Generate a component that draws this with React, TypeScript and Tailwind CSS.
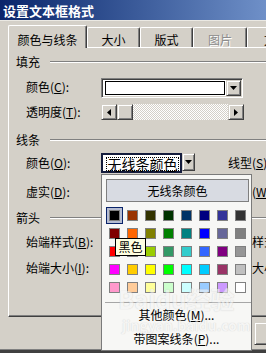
import React from "react";

// 经典 Windows 控件边框
const raised =
  "bg-[#d4d0c8] border border-t-[#d4d0c8] border-l-[#d4d0c8] border-r-[#404040] border-b-[#404040] shadow-[inset_1px_1px_0_#ffffff,inset_-1px_-1px_0_#808080]";
const sunken =
  "border border-t-[#808080] border-l-[#808080] border-r-white border-b-white shadow-[inset_1px_1px_0_#404040,inset_-1px_-1px_0_#d4d0c8]";

const palette = [
  ["#000000", "#993300", "#333300", "#003300", "#003366", "#000080", "#333399", "#333333"],
  ["#800000", "#ff6600", "#808000", "#008000", "#008080", "#0000ff", "#666699", "#808080"],
  ["#ff0000", "#ff9900", "#99cc00", "#339966", "#33cccc", "#3366ff", "#800080", "#969696"],
  ["#ff00ff", "#ffcc00", "#ffff00", "#00ff00", "#00ffff", "#00ccff", "#993366", "#c0c0c0"],
  ["#ff99cc", "#ffcc99", "#ffff99", "#ccffcc", "#ccffff", "#99ccff", "#cc99ff", "#ffffff"],
];

function Acc({ text, k, tail = ":" }: { text: string; k: string; tail?: string }) {
  return (
    <span className="whitespace-nowrap">
      {text}(<u>{k}</u>){tail}
    </span>
  );
}

const Down = () => (
  <svg width="7" height="4" viewBox="0 0 7 4">
    <path d="M0 0h7L3.5 4z" fill="#000" />
  </svg>
);
const Left = () => (
  <svg width="4" height="7" viewBox="0 0 4 7">
    <path d="M4 0v7L0 3.5z" fill="#000" />
  </svg>
);
const Right = () => (
  <svg width="4" height="7" viewBox="0 0 4 7">
    <path d="M0 0v7L4 3.5z" fill="#000" />
  </svg>
);

function Section({ title, mt }: { title: string; mt: string }) {
  return (
    <div className={`${mt} h-[14px] flex items-center pl-[7px]`}>
      <span className="shrink-0">{title}</span>
      <div className="ml-[10px] flex-1 border-t border-t-[#808080] border-b border-b-white" />
    </div>
  );
}

function Tab({ label, w, disabled }: { label: string; w: string; disabled?: boolean }) {
  return (
    <div
      className={`${w} h-[20px] shrink-0 pt-[6px] text-center border-t border-l border-white border-r border-r-[#404040] shadow-[inset_-1px_0_0_#808080] rounded-t-[2px] ${
        disabled ? "text-[#8c8c8c] [text-shadow:1px_1px_0_#ffffff]" : ""
      }`}
    >
      {label}
    </div>
  );
}

export default function App() {
  return (
    <div className="relative w-[266px] h-[353px] overflow-hidden bg-[#d4d0c8] font-['Noto_Sans_CJK_SC',sans-serif] text-[12px] leading-none text-black">
      {/* Title bar */}
      <div className="h-[20px] bg-linear-to-r from-[#0a246a] to-[#6f90c8] pl-[3px] flex items-center">
        <span className="text-white font-bold text-[13px]">设置文本框格式</span>
      </div>
      <div className="h-[1px] bg-[#ebe9e3]" />

      {/* Tabs */}
      <div className="mt-[4px] h-[22px] flex items-end pl-[8px]">
        <div className="relative z-10 w-[79px] h-[23px] -mb-[1px] shrink-0 pt-[8px] text-center bg-[#d4d0c8] border-t border-l border-white border-r border-r-[#404040] shadow-[inset_-1px_0_0_#808080] rounded-t-[2px]">
          颜色与线条
        </div>
        <Tab label="大小" w="w-[53px]" />
        <Tab label="版式" w="w-[53px]" />
        <Tab label="图片" w="w-[54px]" disabled />
        <Tab label="文本框" w="w-[70px]" />
      </div>

      {/* Tab panel */}
      <div className="ml-[8px] w-[330px] h-[270px] border-t border-l border-white border-b border-b-[#404040] shadow-[inset_0_-1px_0_#808080] flex flex-col">
        <Section title="填充" mt="mt-[7px]" />

        <div className="mt-[9px] h-[20px] flex items-center pl-[17px]">
          <div className="w-[75px] shrink-0 -mt-[3px]">
            <Acc text="颜色" k="C" />
          </div>
          <div className={`w-[142px] h-[20px] shrink-0 bg-white ${sunken} flex items-center pl-[3px] pr-[1px]`}>
            <div className="w-[120px] h-[14px] border border-black bg-white" />
            <div className={`ml-auto w-[15px] h-[16px] ${raised} flex items-center justify-center`}>
              <Down />
            </div>
          </div>
        </div>

        <div className="mt-[6px] h-[16px] flex items-center pl-[17px]">
          <div className="w-[75px] shrink-0">
            <Acc text="透明度" k="T" />
          </div>
          <div className="w-[143px] h-[16px] shrink-0 flex">
            <div className={`w-[16px] h-[16px] ${raised} flex items-center justify-center`}>
              <Left />
            </div>
            <div className={`w-[16px] h-[16px] ${raised}`} />
            <div className="flex-1 bg-[repeating-conic-gradient(#d4d0c8_0%_25%,#ffffff_0%_50%)] bg-[length:2px_2px]" />
            <div className={`w-[16px] h-[16px] ${raised} flex items-center justify-center`}>
              <Right />
            </div>
          </div>
        </div>

        <Section title="线条" mt="mt-[13px]" />

        <div className="mt-[6px] h-[20px] flex items-center pl-[17px]">
          <div className="w-[75px] shrink-0">
            <Acc text="颜色" k="O" />
          </div>
          <div className="w-[94px] h-[20px] shrink-0 flex">
            <div className="w-[81px] h-[20px] border-2 border-[#141c3c] bg-white pl-[3px] pr-[1px] pt-[2px]">
              <div className="h-[14px] border border-dotted border-black flex items-center justify-center text-[14px] whitespace-nowrap">
                无线条颜色
              </div>
            </div>
            <div className={`w-[13px] h-[18px] ${raised} flex items-center justify-center`}>
              <Down />
            </div>
          </div>
          <div className="ml-[33px] shrink-0">
            <Acc text="线型" k="S" />
          </div>
        </div>

        <div className="mt-[9px] h-[20px] flex items-center pl-[17px]">
          <div className="w-[75px] shrink-0">
            <Acc text="虚实" k="D" />
          </div>
          <div className={`w-[94px] h-[20px] shrink-0 bg-white ${sunken}`} />
          <div className="ml-[33px] shrink-0">
            <Acc text="粗细" k="W" />
          </div>
        </div>

        <Section title="箭头" mt="mt-[9px]" />

        <div className="mt-[7px] h-[20px] flex items-center pl-[17px]">
          <div className="w-[75px] shrink-0">
            <Acc text="始端样式" k="B" />
          </div>
          <div className={`w-[94px] h-[20px] shrink-0 bg-white ${sunken}`} />
          <div className="ml-[33px] shrink-0">
            <Acc text="末端样式" k="E" />
          </div>
        </div>

        <div className="mt-[6px] h-[20px] flex items-center pl-[17px]">
          <div className="w-[75px] shrink-0">
            <Acc text="始端大小" k="I" />
          </div>
          <div className={`w-[94px] h-[20px] shrink-0 bg-white ${sunken}`} />
          <div className="ml-[33px] shrink-0">
            <Acc text="末端大小" k="Z" />
          </div>
        </div>
      </div>

      {/* Bottom buttons */}
      <div className="h-[32px] flex items-center pl-[254px]">
        <div className={`w-[75px] h-[23px] shrink-0 ${raised}`} />
      </div>
      <div className="h-[1px] bg-[#808080]" />
      <div className="h-[3px] bg-[#404040]" />

      {/* Colour popup */}
      <div className="absolute left-[101px] top-[174px] w-[151px] h-[177px] bg-[#f7f7f5] border border-[#7a7a7a] flex flex-col">
        <div className="ml-[4px] mt-[4px] w-[143px] h-[23px] shrink-0 bg-[#d8dbe2] border border-[#7f7f7f] flex items-center justify-center">
          无线条颜色
        </div>
        <div className="ml-[3px] mt-[4px] grid grid-cols-[repeat(8,18px)] grid-rows-[repeat(5,18px)]">
          {palette.flat().map((c, i) => (
            <div key={i} className="pl-[1px] pt-[1px]">
              <div
                className={`w-[17px] h-[17px] flex items-center justify-center ${
                  i === 0 ? "border border-[#0a246a] bg-[#b6bdd2]" : ""
                }`}
              >
                <div className="w-[11px] h-[11px] border border-[#808080]" style={{ backgroundColor: c }} />
              </div>
            </div>
          ))}
        </div>
        <div className="ml-[3px] mt-[6px] h-[1px] shrink-0 bg-[#a6a6a6]" />
        <div className="h-[24px] shrink-0 flex items-center justify-center">
          <Acc text="其他颜色" k="M" tail="..." />
        </div>
        <div className="h-[23px] shrink-0 flex items-center justify-center">
          <Acc text="带图案线条" k="P" tail="..." />
        </div>
      </div>

      {/* Tooltip */}
      <div className="absolute left-[115px] top-[238px] w-[31px] h-[18px] bg-[#ffffe1] border border-black flex items-center justify-center">
        黑色
      </div>

      {/* Watermark */}
      <div className="absolute left-[118px] top-[287px] text-[24px] font-bold text-[#f4f4f4] opacity-60 [text-shadow:0_0_1px_#b4b4b4] whitespace-nowrap pointer-events-none">
        Baidu经验
      </div>
      <div className="absolute left-[122px] top-[318px] text-[14px] font-bold text-[#f4f4f4] opacity-60 [text-shadow:0_0_1px_#b4b4b4] whitespace-nowrap pointer-events-none">
        jingyan.baidu.com
      </div>
    </div>
  );
}
